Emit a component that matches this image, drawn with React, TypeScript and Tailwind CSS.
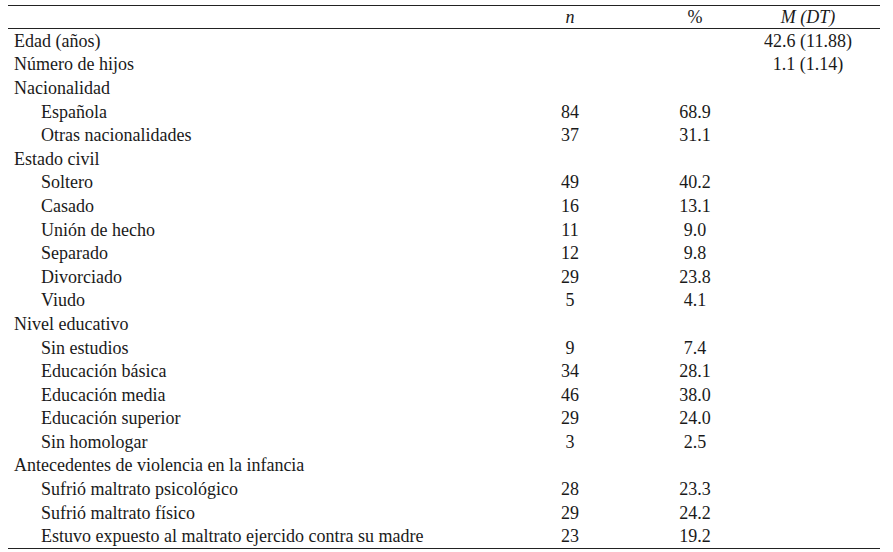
type Row = {
  label: string;
  sub?: boolean;
  n?: string;
  pct?: string;
  m?: string;
};

const rows: Row[] = [
  { label: "Edad (años)", m: "42.6 (11.88)" },
  { label: "Número de hijos", m: "1.1 (1.14)" },
  { label: "Nacionalidad" },
  { label: "Española", sub: true, n: "84", pct: "68.9" },
  { label: "Otras nacionalidades", sub: true, n: "37", pct: "31.1" },
  { label: "Estado civil" },
  { label: "Soltero", sub: true, n: "49", pct: "40.2" },
  { label: "Casado", sub: true, n: "16", pct: "13.1" },
  { label: "Unión de hecho", sub: true, n: "11", pct: "9.0" },
  { label: "Separado", sub: true, n: "12", pct: "9.8" },
  { label: "Divorciado", sub: true, n: "29", pct: "23.8" },
  { label: "Viudo", sub: true, n: "5", pct: "4.1" },
  { label: "Nivel educativo" },
  { label: "Sin estudios", sub: true, n: "9", pct: "7.4" },
  { label: "Educación básica", sub: true, n: "34", pct: "28.1" },
  { label: "Educación media", sub: true, n: "46", pct: "38.0" },
  { label: "Educación superior", sub: true, n: "29", pct: "24.0" },
  { label: "Sin homologar", sub: true, n: "3", pct: "2.5" },
  { label: "Antecedentes de violencia en la infancia" },
  { label: "Sufrió maltrato psicológico", sub: true, n: "28", pct: "23.3" },
  { label: "Sufrió maltrato físico", sub: true, n: "29", pct: "24.2" },
  { label: "Estuvo expuesto al maltrato ejercido contra su madre", sub: true, n: "23", pct: "19.2" },
];

const cols = "grid grid-cols-[502px_120px_130px_96px_24px]";

export default function App() {
  return (
    <div className="min-h-screen bg-white pl-[8px] pt-[5px] font-['Liberation_Serif','Times_New_Roman',serif] text-[18px] text-[#1a1a1a]">
      <div className="w-[872px] border-y border-[#222]">
        {/* cabecera */}
        <div className={`${cols} h-[23px] items-center border-b border-[#222] leading-none`}>
          <div />
          <div className="text-center italic">n</div>
          <div className="text-center">%</div>
          <div className="text-center italic">M (DT)</div>
          <div />
        </div>

        {rows.map((r, i) => (
          <div key={i} className={`${cols} h-[23.6px] items-center leading-none`}>
            <div className={r.sub ? "pl-[33px] whitespace-nowrap" : "pl-[6px] whitespace-nowrap"}>{r.label}</div>
            <div className="text-center">{r.n}</div>
            <div className="text-center">{r.pct}</div>
            <div className="flex justify-center whitespace-nowrap">{r.m}</div>
            <div />
          </div>
        ))}
      </div>
    </div>
  );
}
